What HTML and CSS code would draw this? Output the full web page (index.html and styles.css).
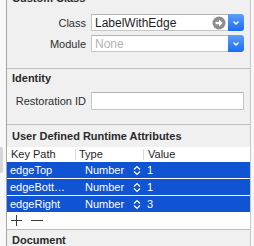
FILE: index.html
```html
<!DOCTYPE html>
<html lang="en">
<head>
    <meta charset="UTF-8">
    <meta name="viewport" content="width=device-width, initial-scale=1.0">
    <title>Identity Inspector</title>
    <link rel="stylesheet" href="styles.css">
</head>
<body>

    <div class="window">
        <!-- Left edge of the neighbouring pane -->
        <div class="gutter"><div class="gutter-tab"></div></div>

        <div class="inspector">

            <!-- Custom Class -->
            <section class="group group-custom">
                <h3 class="group-title">Custom Class</h3>
                <div class="field-row">
                    <label class="field-label">Class</label>
                    <div class="combo">
                        <div class="combo-field">
                            <span class="combo-text">LabelWithEdge</span>
                            <svg class="goto-icon" width="14" height="14" viewBox="0 0 14 14">
                                <circle cx="7" cy="7" r="6.5" fill="#8d8d8d"/>
                                <path d="M3.5 5.8h3.6V3.6L10.6 7l-3.5 3.4V8.2H3.5z" fill="#fff"/>
                            </svg>
                        </div>
                        <span class="combo-btn">
                            <svg width="16" height="17" viewBox="0 0 16 17">
                                <polyline points="5.5,7.5 8,10 10.5,7.5" fill="none" stroke="#fff" stroke-width="1.4"/>
                            </svg>
                        </span>
                    </div>
                </div>
                <div class="field-row">
                    <label class="field-label">Module</label>
                    <div class="combo">
                        <div class="combo-field">
                            <span class="combo-text placeholder">None</span>
                        </div>
                        <span class="combo-btn">
                            <svg width="16" height="17" viewBox="0 0 16 17">
                                <polyline points="5.5,7.5 8,10 10.5,7.5" fill="none" stroke="#fff" stroke-width="1.4"/>
                            </svg>
                        </span>
                    </div>
                </div>
            </section>

            <!-- Identity -->
            <section class="group group-identity">
                <h3 class="group-title">Identity</h3>
                <div class="field-row tall">
                    <label class="field-label">Restoration ID</label>
                    <input class="text-input" type="text">
                </div>
            </section>

            <!-- User Defined Runtime Attributes -->
            <section class="group group-attrs">
                <h3 class="group-title">User Defined Runtime Attributes</h3>
                <div class="attr-table">
                    <div class="attr-head">
                        <span>Key Path</span>
                        <span>Type</span>
                        <span>Value</span>
                    </div>
                    <div class="attr-row">
                        <span class="key">edgeTop</span>
                        <span class="type">Number <svg width="8" height="11" viewBox="0 0 8 11"><polyline points="1,4.5 4,1.5 7,4.5" /><polyline points="1,6.5 4,9.5 7,6.5" /></svg></span>
                        <span class="value">1</span>
                    </div>
                    <div class="attr-row">
                        <span class="key">edgeBottom</span>
                        <span class="type">Number <svg width="8" height="11" viewBox="0 0 8 11"><polyline points="1,4.5 4,1.5 7,4.5" /><polyline points="1,6.5 4,9.5 7,6.5" /></svg></span>
                        <span class="value">1</span>
                    </div>
                    <div class="attr-row">
                        <span class="key">edgeRight</span>
                        <span class="type">Number <svg width="8" height="11" viewBox="0 0 8 11"><polyline points="1,4.5 4,1.5 7,4.5" /><polyline points="1,6.5 4,9.5 7,6.5" /></svg></span>
                        <span class="value">3</span>
                    </div>
                    <div class="attr-foot">
                        <svg width="11" height="11" viewBox="0 0 11 11"><path d="M5.5 0v11M0 5.5h11" stroke="#3a3a3a" stroke-width="1"/></svg>
                        <svg width="12" height="11" viewBox="0 0 12 11"><path d="M0 5.5h12" stroke="#3a3a3a" stroke-width="1"/></svg>
                    </div>
                </div>
            </section>

            <!-- Document -->
            <section class="group group-document">
                <h3 class="group-title">Document</h3>
            </section>

        </div>
    </div>

</body>
</html>
```

FILE: styles.css
```css
* {
    margin: 0;
    padding: 0;
    box-sizing: border-box;
}

body {
    font-family: "Liberation Sans", Arial, sans-serif;
    font-size: 11px;
    color: #262626;
    background-color: #f8f8f8;
    overflow: hidden;
}

.window {
    display: flex;
    height: 246px;
}

/* Neighbouring pane edge */
.gutter {
    width: 6px;
}

.gutter-tab {
    width: 3px;
    height: 26px;
    margin-top: 147px;
    background-color: #d6d6d6;
    border-radius: 0 2px 2px 0;
}

/* Inspector panel */
.inspector {
    width: 245px;
    background-color: #f0f0f0;
    border-left: 1px solid #a6a6a6;
    border-right: 1px solid #c9c9c9;
    overflow: hidden;
}

.group {
    border-bottom: 1px solid #bdbdbd;
}

.group-title {
    font-size: 11px;
    font-weight: 700;
    color: #2a2a2a;
    padding-left: 5px;
    line-height: 16px;
}

.group-custom {
    margin-top: -10px;
    padding-bottom: 16px;
}

.group-custom .group-title {
    margin-bottom: 8px;
}

.group-identity {
    padding-bottom: 14px;
}

.group-identity .group-title {
    line-height: 18px;
    margin-bottom: 5px;
}

.group-attrs {
    padding-top: 1px;
}

.group-attrs .group-title {
    line-height: 20px;
    margin-bottom: 1px;
}

.group-document {
    border-bottom: none;
}

.group-document .group-title {
    line-height: 20px;
}

/* Label + control rows */
.field-row {
    display: flex;
    align-items: center;
    height: 17px;
}

.field-row + .field-row {
    margin-top: 4px;
}

.field-row.tall {
    height: 18px;
}

.field-label {
    width: 79px;
    margin-right: 5px;
    text-align: right;
    color: #2e2e2e;
    white-space: nowrap;
}

.combo {
    display: flex;
    width: 153px;
    height: 17px;
}

.combo-field {
    flex: 1;
    display: flex;
    align-items: center;
    background-color: #fff;
    border: 1px solid #c6c6c6;
    border-top-color: #b4b4b4;
    border-right: none;
    padding-left: 3px;
    padding-right: 2px;
}

.combo-text {
    flex: 1;
    font-size: 12px;
    color: #1e1e1e;
}

.combo-text.placeholder {
    color: #b3b3b3;
}

.goto-icon {
    display: block;
}

.combo-btn {
    width: 16px;
    height: 17px;
    background: linear-gradient(#5c9ef9, #1b6df3);
    border-radius: 0 3px 3px 0;
}

.combo-btn svg {
    display: block;
}

.text-input {
    width: 153px;
    height: 18px;
    background-color: #fff;
    border: 1px solid #c6c6c6;
    border-top-color: #b4b4b4;
    outline: none;
}

/* Runtime attributes table */
.attr-table {
    background-color: #fff;
}

.attr-head,
.attr-row {
    display: grid;
    grid-template-columns: 68px 68px 1fr;
}

.attr-head {
    height: 15px;
    padding: 2px 0;
    line-height: 11px;
    color: #1e1e1e;
}

.attr-head span {
    padding-left: 4px;
}

.attr-head span + span {
    border-left: 1px solid #d9d9d9;
    padding-left: 3px;
}

.attr-head span:last-child {
    padding-left: 4px;
}

.attr-row {
    height: 16px;
    line-height: 16px;
    background-color: #1053d3;
    color: #fff;
}

.attr-row + .attr-row {
    margin-top: 1px;
}

.attr-row .key {
    padding-left: 3px;
    padding-right: 8px;
    white-space: nowrap;
    overflow: hidden;
    text-overflow: ellipsis;
}

.attr-row .type {
    display: flex;
    align-items: center;
    padding-left: 10px;
    padding-right: 2px;
}

.attr-row .type svg {
    margin-left: auto;
    fill: none;
    stroke: #fff;
    stroke-width: 1.2;
}

.attr-row .value {
    padding-left: 4px;
}

.attr-foot {
    display: flex;
    align-items: center;
    gap: 9px;
    height: 17px;
    padding-left: 4px;
}

.attr-foot svg {
    display: block;
}
```
